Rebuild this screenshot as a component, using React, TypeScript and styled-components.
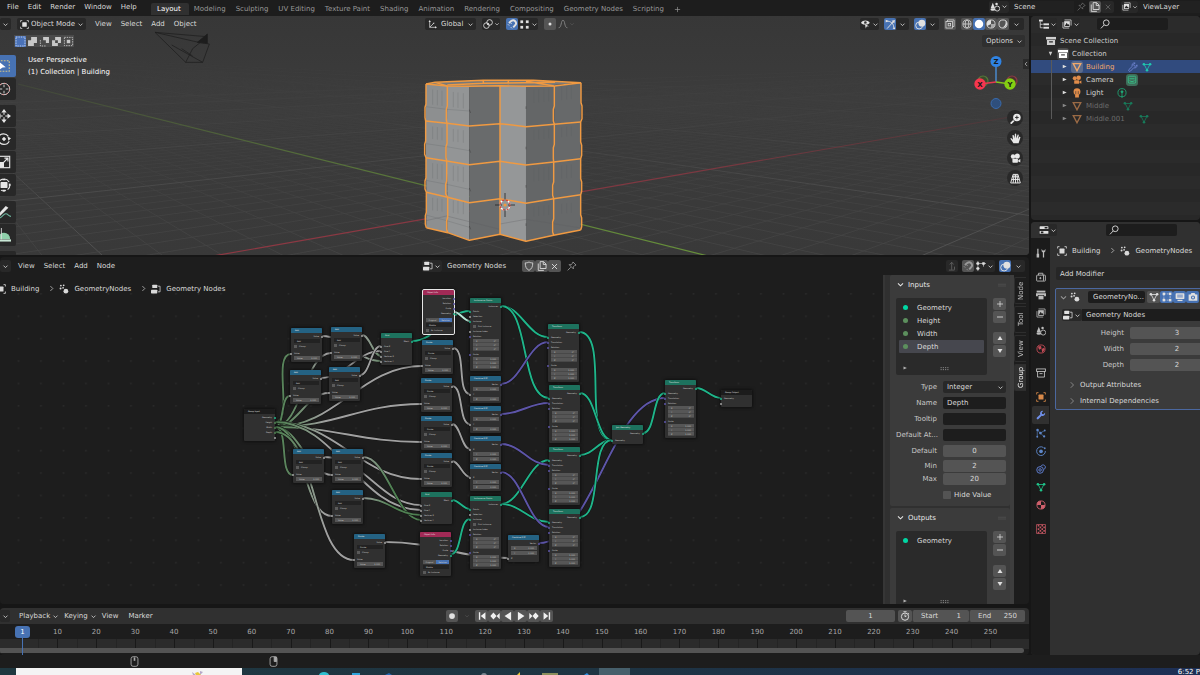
import React from 'react';
import styled, { createGlobalStyle, css } from 'styled-components';

const Global = createGlobalStyle`
  *, *::before, *::after { box-sizing: border-box; }
  html, body { margin: 0; background: #161616; }
  body, button, input, select {
    font-family: 'DejaVu Sans', Verdana, sans-serif;
    font-size: 7px;
    line-height: 10px;
    color: #d9d9d9;
  }
  button, input, select { margin: 0; padding: 0; border: 0; background: none; outline: none; appearance: none; border-radius: 0; }
  svg { display: block; flex: none; }
`;

/* ---------- icons, drawn on a 16 unit square ---------- */

const mesh = (
  <g fill="none" stroke="currentColor" strokeWidth="1.3">
    <path d="M3.5 4h9L8 13z" />
    <g fill="currentColor" stroke="none">
      <circle cx="3" cy="3.5" r="2" /><circle cx="13" cy="3.5" r="2" /><circle cx="8" cy="13" r="2" />
    </g>
  </g>
);

const movieCamera = (
  <g fill="currentColor">
    <circle cx="4.4" cy="5" r="3.2" /><circle cx="10.6" cy="4.4" r="3.7" />
    <rect x="3.5" y="8.5" width="8" height="5.5" rx="1" /><path d="M12 10.5l3-1.6v5l-3-1.6z" />
  </g>
);

const imageStack = (
  <g>
    <path d="M4 1.5h10.5v9" fill="none" stroke="currentColor" strokeWidth="1.2" />
    <path d="M1.5 5v9.500h10" fill="none" stroke="currentColor" strokeWidth="1.2" />
    <rect x="3.500" y="3.500" width="9" height="9" fill="currentColor" />
    <path d="M4.500 11l3-5 2 3 1-1 1.500 3z" fill="#222" />
  </g>
);

const icons: Record<string, React.ReactNode> = {
  down: <path d="M3.500 6L8 10.500 12.500 6" fill="none" stroke="currentColor" strokeWidth="1.800" />,
  right: <path d="M5.500 2.500L11 8l-5.500 5.500" fill="none" stroke="currentColor" strokeWidth="1.600" />,
  left: <path d="M11 2.500L5.500 8l5.500 5.500" fill="none" stroke="currentColor" strokeWidth="1.800" />,
  triRight: <path d="M4 4l9 4-9 4z" fill="currentColor" />,
  triDown: <path d="M4 4h8l-4 9z" fill="currentColor" />,
  up: <path d="M3 12l5-8 5 8z" fill="currentColor" />,
  downFill: <path d="M3 4l5 8 5-8z" fill="currentColor" />,
  plus: <path d="M8 2v12M2 8h12" stroke="currentColor" strokeWidth="1.500" />,
  minus: <path d="M2 8h12" stroke="currentColor" strokeWidth="1.700" />,
  close: <path d="M3.500 3.500l9 9M12.500 3.500l-9 9" stroke="currentColor" strokeWidth="1.600" />,
  grip: <path d="M1 6.500h14M1 10h14" stroke="currentColor" strokeWidth="1.300" strokeDasharray="2 2" />,
  object: (
    <g><rect x="4" y="4" width="8" height="8" rx="1" fill="currentColor" />
      <path d="M1 4V1h3M12 1h3v3M15 12v3h-3M4 15H1v-3" fill="none" stroke="currentColor" strokeWidth="1.300" /></g>
  ),
  selNew: (
    <g><rect width="16" height="16" fill="#4a72b8" />
      <rect x="1.500" y="1.500" width="13" height="13" fill="none" stroke="#c9d8f2" strokeWidth="1.300" strokeDasharray="2 1.500" /></g>
  ),
  selAdd: <path d="M6 1.500h8.500V10H10v4.500H1.500V6H6z" fill="currentColor" />,
  selSub: (
    <g><path d="M6 1.500h8.500V10H10V6H6z" fill="currentColor" />
      <path d="M2 6v8.500h8" fill="none" stroke="currentColor" strokeWidth="1.300" strokeDasharray="2 1.500" /></g>
  ),
  selDiff: <path fillRule="evenodd" d="M6 1.500h8.500V10H10v4.500H1.500V6H6zM6 6v4h4V6z" fill="currentColor" />,
  selInt: (
    <g><rect x="5.500" y="5.500" width="5" height="5" fill="currentColor" />
      <rect x="2" y="2" width="12" height="12" fill="none" stroke="currentColor" strokeWidth="1.300" strokeDasharray="2 1.500" /></g>
  ),
  boxTool: (
    <g><rect x="1" y="2" width="13" height="12" fill="none" stroke="#d3c489" strokeWidth="1.200" strokeDasharray="2 1.400" />
      <path d="M3 3.500l7 6-3.600.2L3 12z" fill="#fff" /></g>
  ),
  cursorTool: (
    <g fill="none" stroke="currentColor" strokeWidth="1">
      <circle cx="8" cy="8" r="6.500" /><circle cx="8" cy="8" r="6.500" stroke="#d88" strokeDasharray="2.500 2.500" />
      <path d="M8 3v3M8 10v3M3 8h3M10 8h3" />
    </g>
  ),
  moveTool: (
    <g fill="currentColor"><path d="M8 0l3 4H5zM8 16l3-4H5zM0 8l4-3v6zM16 8l-4-3v6z" />
      <path d="M8 4v2.500M8 9.500v3M4 8h2.500M9.500 8h3" stroke="currentColor" strokeWidth="1.200" /></g>
  ),
  rotateTool: (
    <g><path d="M2 5a6.700 6.700 0 0 1 11 0M14 10.500a6.700 6.700 0 0 1-12 0" fill="none" stroke="currentColor" strokeWidth="1.300" />
      <path d="M12 5l4 2-3 3zM8 5.500L10.500 8 8 10.500 5.500 8z" fill="currentColor" /></g>
  ),
  scaleTool: (
    <g><rect x="1.500" y="1.500" width="13" height="13" fill="none" stroke="currentColor" strokeWidth="1.300" />
      <rect x="1.500" y="8" width="6.500" height="6.500" fill="currentColor" />
      <path d="M7 9l5-5M8.500 3.500h4v4" fill="none" stroke="currentColor" strokeWidth="1.300" /></g>
  ),
  transformTool: (
    <g><circle cx="8" cy="8" r="6.800" fill="none" stroke="currentColor" strokeWidth="1.200" strokeDasharray="6 2" />
      <rect x="4" y="4.500" width="8" height="7" rx="1" fill="currentColor" />
      <path d="M8 0l2 2.500H6zM8 16l2-2.500H6zM16 8l-2.500-2v4z" fill="currentColor" /></g>
  ),
  annotateTool: (
    <g><path d="M0 12L10 1l3 2L3 13z" fill="currentColor" />
      <path d="M2 15c4 0 5-5 8-5 3 0 3 3 6 3" fill="none" stroke="#6fb7a0" strokeWidth="1.200" /></g>
  ),
  measureTool: (
    <g><path d="M1 12.500A7 7 0 0 1 15 12.500z" fill="#8fd0ab" /><rect x="-2" y="13" width="18" height="2.500" fill="#c9e8d6" />
      <path d="M5 0v13" stroke="#ddd" strokeWidth="1" /></g>
  ),
  axes: (
    <g><path d="M3 2v11h11M3 13l7-7" fill="none" stroke="currentColor" strokeWidth="1.300" />
      <path d="M3 0l2 3.500H1zM16 13l-3.500-2v4zM11 4v3L8 6z" fill="currentColor" /></g>
  ),
  pivot: (
    <g fill="none" stroke="currentColor" strokeWidth="1.400">
      <circle cx="5.500" cy="10.500" r="4.500" /><circle cx="10.500" cy="5.500" r="4.500" /><circle cx="8" cy="8" r="1" fill="currentColor" />
    </g>
  ),
  magnet: (
    <g><path d="M3 6.500L7.200 3a4.600 4.600 0 0 1 6.300 6.500L10 13.500" fill="none" stroke="currentColor" strokeWidth="3" />
      <path d="M1.500 8.500l2 2M5.500 6l2 2M8 15l-2-2" stroke="currentColor" strokeWidth="1.500" /></g>
  ),
  verts: <g fill="currentColor"><rect x="2" y="2" width="4" height="4" /><rect x="10" y="2" width="4" height="4" /><rect x="2" y="10" width="4" height="4" /><rect x="10" y="10" width="4" height="4" /></g>,
  dot: <circle cx="8" cy="8" r="2.400" fill="currentColor" />,
  record: <circle cx="8" cy="8" r="4.600" fill="currentColor" />,
  falloff: <path d="M1 14c5 0 3.500-12 7-12s2 12 7 12" fill="none" stroke="currentColor" strokeWidth="1.400" />,
  eye: (
    <g><path d="M0 6c3-5 11-5 14 0-3 4.500-11 4.500-14 0z" fill="currentColor" /><circle cx="7" cy="5.500" r="2" fill="#333" />
      <path d="M6 6l1 9 2.500-3 3.500.4z" fill="currentColor" stroke="#333" strokeWidth=".7" /></g>
  ),
  gizmo: (
    <g><path d="M2 3c7 0 11 4 11 11M3 14L12 4" fill="none" stroke="currentColor" strokeWidth="1.400" />
      <path d="M14.500 1.500l-5 1 4 4zM1 1l4 2-4 2zM15 15l-4-1 3-2z" fill="currentColor" /></g>
  ),
  overlay: (
    <g><circle cx="6" cy="9.500" r="5" fill="none" stroke="currentColor" strokeWidth="1.400" /><circle cx="10" cy="6" r="5" fill="currentColor" /></g>
  ),
  xray: <g fill="none" stroke="currentColor" strokeWidth="1.200"><rect x="1.500" y="4" width="10.500" height="10.500" /><path d="M4 4V1.500h10.500V12H12" /><rect x="5" y="7" width="4" height="4" /></g>,
  wire: <g fill="none" stroke="currentColor" strokeWidth="1.200"><circle cx="8" cy="8" r="6.500" /><ellipse cx="8" cy="8" rx="3" ry="6.500" /><path d="M1.500 8h13" /></g>,
  solid: <circle cx="8" cy="8" r="6.800" fill="currentColor" />,
  material: <g><circle cx="8" cy="8" r="6.500" fill="none" stroke="currentColor" strokeWidth="1.300" /><path d="M8 8V1.500A6.500 6.500 0 0 0 2 11z" fill="currentColor" /><path d="M8 8h6a6 6 0 0 1-6 6z" fill="currentColor" opacity=".6" /></g>,
  rendered: <g><circle cx="8" cy="8" r="6.500" fill="none" stroke="currentColor" strokeWidth="1.400" /><path d="M12 3a6 6 0 0 1-5 10.500C11 12 13 8 12 3z" fill="currentColor" /></g>,
  tree: <g fill="currentColor"><rect x="0" y="1" width="6" height="3" /><path d="M2 4v10h4M2 8.500h4" fill="none" stroke="currentColor" strokeWidth="1.200" /><rect x="7" y="7" width="9" height="3" /><rect x="7" y="12.500" width="9" height="3" /></g>,
  imageStack,
  search: <g fill="none" stroke="currentColor" strokeWidth="1.500"><circle cx="10" cy="6" r="4.600" /><path d="M6.700 9.500L1.500 15" /></g>,
  archive: <g fill="currentColor"><rect x="0" y="1.500" width="16" height="4" /><path fillRule="evenodd" d="M1.500 6.500h13v8h-13zM5 8.500v1.800h6V8.500z" /></g>,
  archiveLine: <g fill="none" stroke="currentColor" strokeWidth="1.300"><rect x="1" y="1.500" width="14" height="4" /><path d="M2.500 5.500v9h11v-9M5.500 9h5" /></g>,
  triangle: <path d="M2 2.500h12L8 14z" fill="none" stroke="currentColor" strokeWidth="2.200" />,
  wrench: <path d="M14.500 4.500a4 4 0 0 1-5.400 4.700L4 14.500a1.700 1.700 0 0 1-2.500-2.500L6.800 7A4 4 0 0 1 11.500 1.500L9.200 4l.6 2.200 2.200.6z" fill="currentColor" />,
  wrenchLine: <path d="M14.500 4.500a4 4 0 0 1-5.400 4.700L4 14.500a1.700 1.700 0 0 1-2.500-2.500L6.800 7A4 4 0 0 1 11.500 1.500L9.200 4l.6 2.200 2.200.6z" fill="none" stroke="currentColor" strokeWidth="1.200" />,
  mesh,
  movieCamera,
  cameraData: <g fill="none" stroke="currentColor" strokeWidth="1.300"><rect x="2" y="2" width="12" height="11" rx="2" /><path d="M4 6h8M4 9c3 2 5 2 8 0" /></g>,
  bulb: <g fill="currentColor"><circle cx="8" cy="6" r="5.500" /><path d="M5 10h6v5H5z" /><path d="M6 5v5M10 5v5" stroke="#333" strokeWidth="1" /></g>,
  lightData: <g fill="none" stroke="currentColor" strokeWidth="1.300"><circle cx="8" cy="7.500" r="6.500" /><circle cx="8" cy="6" r="1.600" fill="currentColor" /><path d="M8 7v9" /></g>,
  scene: <g fill="currentColor"><path d="M4.500 1L8 10H1z" /><circle cx="10.500" cy="3" r="2" /><circle cx="11.500" cy="10.500" r="4" fill="none" stroke="currentColor" strokeWidth="1.400" /><ellipse cx="4.500" cy="12" rx="3.800" ry="2" /></g>,
  pin: <path d="M9.500 1.500l5 5-2 .6-2.500 2.500.2 3-6.800-6.800 3 .2L9 3.500zM6 10l-5 5" fill="none" stroke="currentColor" strokeWidth="1.200" />,
  copy: <g fill="none" stroke="currentColor" strokeWidth="1.400"><path d="M5 1h5.500L14.500 5v7H5z" /><path d="M10 1v4.500h4.500M2 4v11h9" /></g>,
  shield: <path d="M8 1.500C6 3 4 3 2 3c0 6 1.500 9.500 6 12 4.500-2.500 6-6 6-12-2 0-4 0-6-1.500z" fill="none" stroke="currentColor" strokeWidth="1.300" />,
  nodes: <g fill="currentColor"><rect x="2" y="1" width="8" height="5.500" rx="1" /><rect x="0" y="9" width="10" height="6" rx="1" /><path d="M11 3.500h3.500v9H11" fill="none" stroke="currentColor" strokeWidth="1.200" /></g>,
  geo: <g fill="currentColor"><circle cx="11" cy="11.500" r="3.800" /><circle cx="3" cy="2.500" r="1.400" /><circle cx="7.500" cy="2" r="1.400" /><circle cx="2.500" cy="7" r="1.600" /><circle cx="6.500" cy="6" r="1.400" /></g>,
  props: <g fill="currentColor"><rect x="1" y="2" width="14" height="4.500" rx="1" /><rect x="1" y="9.500" width="14" height="4.500" rx="1" /><path d="M9 3h4.500v2.500H9zM3 10.500h4V13H3z" fill="#222" /></g>,
  parent: <path d="M3 14.500h9M7.500 14V2.500M4.500 5.500l3-3.500 3 3.500M12 14V9" fill="none" stroke="currentColor" strokeWidth="1.300" />,
  snapGrid: <g fill="currentColor"><path d="M3 0v16M0 4h16M0 12h6M12 4v5" stroke="currentColor" strokeWidth="1" fill="none" /><rect x="1" y="2" width="4" height="4" /><rect x="10" y="2" width="4" height="4" /><rect x="1" y="10" width="4" height="4" /></g>,
  tools: <g fill="currentColor"><path d="M2 1h2v8h1v6H1V9h1z" /><path d="M9 1v4l2 2v8h2V7l2-2V1l-1.500 3h-3z" /></g>,
  render: <g fill="none" stroke="currentColor" strokeWidth="1.400"><rect x="1" y="5" width="14" height="9.500" rx="1" /><path d="M4 5V2h7v3M12 5v9" /><circle cx="7" cy="9.800" r="1" fill="currentColor" /></g>,
  output: <g fill="currentColor"><rect x="1" y="1" width="14" height="3" /><path d="M0 5h16v5h-3V8H3v2H0z" /><rect x="4" y="9" width="8" height="6" /></g>,
  world: <g><circle cx="8" cy="8" r="6.500" fill="none" stroke="currentColor" strokeWidth="1.400" /><path d="M3 4l5-1 1 4-4 2zM9 8l4-2 1 3-4 5z" fill="currentColor" /></g>,
  particles: <g><path d="M2 3l5 5 7-4M2 3v11M7 8l6 6" fill="none" stroke="currentColor" strokeWidth="1" /><g fill="currentColor"><circle cx="2.500" cy="3" r="2" /><circle cx="7" cy="8" r="2.200" /><circle cx="14" cy="4" r="1.500" /><circle cx="2" cy="14" r="1.500" /><circle cx="13" cy="13.500" r="1.800" /></g></g>,
  physics: <g><path d="M12 2.500A7 7 0 1 0 15 8" fill="none" stroke="currentColor" strokeWidth="1.500" /><circle cx="8" cy="8.500" r="3" fill="currentColor" /><circle cx="14" cy="3.500" r="1.500" fill="currentColor" /></g>,
  constraint: <g fill="none" stroke="currentColor" strokeWidth="1.600"><circle cx="6.500" cy="9.500" r="5.300" /><circle cx="6.500" cy="9.500" r="2" /><path d="M7 4.500c2-4 7-4 8 0 0 3-2 4-3 5" /></g>,
  materialTab: <g><circle cx="8" cy="8" r="6.500" fill="none" stroke="currentColor" strokeWidth="1.400" /><path d="M8 1.500V8H1.500A6.500 6.500 0 0 1 8 1.500zM8 8h6.500A6.500 6.500 0 0 1 8 14.500z" fill="currentColor" /></g>,
  texture: <g><rect x="1" y="1" width="14" height="14" fill="none" stroke="currentColor" strokeWidth="1.200" /><path d="M4 1v14M10 1v14" stroke="currentColor" strokeWidth="2.500" strokeDasharray="2.800 2.800" /><path d="M7 1v14M13 1v14" stroke="currentColor" strokeWidth="2.500" strokeDasharray="2.800 2.800" strokeDashoffset="2.800" /></g>,
  editMesh: <g><rect x="3" y="3" width="10" height="10" fill="none" stroke="currentColor" strokeWidth="1" strokeDasharray="3 1.500" /><g fill="currentColor"><rect x="1" y="1" width="4" height="4" /><rect x="11" y="1" width="4" height="4" /><rect x="1" y="11" width="4" height="4" /><rect x="11" y="11" width="4" height="4" /></g></g>,
  monitor: <g><rect x="1" y="2" width="14" height="9" rx="1" fill="currentColor" /><path d="M3.500 4h9v5h-9z" fill="#4a72b8" opacity=".5" /><rect x="4" y="12.500" width="8" height="2" fill="currentColor" /></g>,
  photo: <g><path fillRule="evenodd" d="M1 4h3l1.500-2.500h5L12 4h3v10H1zM8 5.500a3.300 3.300 0 1 0 0 6.600 3.300 3.300 0 0 0 0-6.600z" fill="currentColor" /><circle cx="8" cy="8.800" r="1.600" fill="currentColor" /></g>,
  zoomIn: <g><circle cx="10" cy="6.500" r="5.500" fill="currentColor" /><path d="M5.500 11L1 15.500" stroke="currentColor" strokeWidth="2.600" /><path d="M10 3.800v5.400M7.300 6.500h5.400" stroke="#222" strokeWidth="1.300" /></g>,
  hand: <path d="M5 15C3 12 1.500 10 .5 8.500 1.500 7 3 8 4.500 10L3.500 3.500C4.500 2 5.500 3 6 4.500L7 8V1.500c1-1.500 2-1 2 .5l.2 6L11 2.500c1-1 2 0 1.700 1l-1.200 5.500L13.500 5.500c1.500-.5 2 .5 1.500 1.500L12.500 15z" fill="currentColor" />,
  persp: <path d="M4.500 2h7L15 14.500H1zM8 2v12.500M3.600 5.500h8.800M2.500 9.500h11M6 2L4.500 14.500M10 2l1.500 12.500" fill="none" stroke="currentColor" strokeWidth="1.400" />,
  first: <path d="M3 2v12h2.200V2zM13.500 2v12L6 8z" fill="currentColor" />,
  last: <path d="M13 2v12h-2.200V2zM2.500 2v12L10 8z" fill="currentColor" />,
  prevKey: <path d="M5.500 2.500L10.500 8l-5 5.500L.5 8zM15.500 3v10L10.500 8z" fill="currentColor" />,
  nextKey: <path d="M10.500 2.500L15.500 8l-5 5.500L5.500 8zM.5 3v10L5.500 8z" fill="currentColor" />,
  playBack: <path d="M13 1v14L2.500 8z" fill="currentColor" />,
  play: <path d="M3 1v14L13.500 8z" fill="currentColor" />,
  clock: <g fill="none" stroke="currentColor" strokeWidth="1.500"><circle cx="8" cy="9" r="5.800" /><path d="M5.500 1.200h5M8 5.500V9l2.500-1M12.500 3.500l2 1.500" /></g>,
  mouseM: <g fill="none" stroke="currentColor" strokeWidth="1.300"><rect x="3" y="1" width="10" height="14" rx="3" /><path d="M8 2v5" strokeWidth="2.400" /></g>,
  mouseR: <g fill="none" stroke="currentColor" strokeWidth="1.300"><rect x="3" y="1" width="10" height="14" rx="3" /><path d="M9 1.500h3.500V8H9z" fill="currentColor" /></g>,
};

const Svg = styled.svg<{ $c?: string }>`color: ${p => p.$c || 'inherit'};`;
function Icon({ n, s = 10, c }: { n: string; s?: number; c?: string }) {
  return <Svg viewBox="0 0 16 16" width={s} height={s} $c={c} aria-hidden="true">{icons[n]}</Svg>;
}

/* ---------- shared parts ---------- */

const Shell = styled.div`
  height: 100vh; min-height: 620px; display: flex; flex-direction: column; overflow: hidden; background: #161616;
`;
const Group = styled.div<{ $w?: number; $gap?: number; $end?: boolean }>`
  display: flex; align-items: center; flex: none;
  gap: ${p => p.$gap || 0}px;
  ${p => p.$w && css`width: ${p.$w}px;`}
  ${p => p.$end && css`margin-left: auto;`}
`;
const IconButton = styled.button<{ $tone?: 'dark' | 'grey' | 'blue' | 'none'; $w?: number }>`
  display: flex; align-items: center; justify-content: center; gap: 1px; flex: none;
  height: 12px; width: ${p => p.$w || 12}px; border-radius: 2px;
  color: #e0e0e0;
  background: ${p => ({ dark: '#282828', grey: '#545454', blue: '#4772b3', none: 'transparent' })[p.$tone || 'dark']};
`;
const MenuButton = styled.button`flex: none; white-space: nowrap; height: 12px; display: flex; align-items: center; gap: 2px;`;
const SelectWrap = styled.label<{ $w: number; $pad: number }>`
  position: relative; display: flex; align-items: center; flex: none;
  width: ${p => p.$w}px; height: 12px; border-radius: 2px; background: #282828; color: #e0e0e0;
  > svg:first-child { position: absolute; left: 3px; }
  > svg:last-child { position: absolute; right: 2px; pointer-events: none; }
  select { width: 100%; height: 100%; padding-left: ${p => p.$pad}px; }
`;
function Drop({ label, value, w, pad = 4, icon }: { label: string; value: string; w: number; pad?: number; icon?: string }) {
  return (
    <SelectWrap $w={w} $pad={pad}>
      {icon && <Icon n={icon} s={9} />}
      <select aria-label={label} defaultValue={value}><option>{value}</option></select>
      <Icon n="down" s={7} />
    </SelectWrap>
  );
}
const TextField = styled.input<{ $number?: boolean }>`
  width: 100%; min-width: 0; height: 12px; border-radius: 2px; padding: 0 4px;
  background: ${p => (p.$number ? '#545454' : '#1d1d1d')};
  text-align: ${p => (p.$number ? 'center' : 'left')};
`;
const SearchBox = styled.label`
  display: flex; align-items: center; width: 71px; height: 12px; padding: 0 3px; background: #1d1d1d; border-radius: 2px;
  input { flex: 1; min-width: 0; }
`;
const Search = ({ label }: { label: string }) => (
  <SearchBox><Icon n="search" s={10} /><input aria-label={label} /></SearchBox>
);

/* ---------- top bar ---------- */

const TopBar = styled.header`
  flex: none; height: 16px; display: flex; align-items: flex-start; background: #1d1d1d; overflow: hidden;
`;
const Menus = styled.nav`display: flex; gap: 9px; width: 151px; padding: 1px 0 0 7px;`;
const Tabs = styled.nav`display: flex; padding-top: 3px;`;
const Tab = styled.button<{ $on?: boolean }>`
  height: 12px; padding: 0 ${p => (p.$on ? '8px 0 6px' : '5px')}; white-space: nowrap; border-radius: 2px 2px 0 0;
  color: ${p => (p.$on ? '#fff' : '#989898')};
  background: ${p => (p.$on ? '#303030' : 'transparent')};
`;
const SceneBar = styled.div`
  display: flex; align-items: center; flex: none; margin-left: auto; width: 211px; height: 13px; overflow: hidden; white-space: nowrap;
`;
const SceneName = styled.input<{ $w: number }>`flex: none; width: ${p => p.$w}px; height: 12px; padding-left: 5px; background: #212121;`;

/* ---------- 3D viewport ---------- */

const Main = styled.div`flex: 1; min-height: 0; display: grid; grid-template-columns: minmax(0, 1fr) 169px; gap: 2px;`;
const Column = styled.div`display: flex; flex-direction: column; min-width: 0; min-height: 0;`;
const Viewport = styled.section`
  position: relative; flex: 0 0 239px; overflow: hidden; border-radius: 0 0 4px 0; background: #3b3b3b;
`;
const Scene3D = styled.svg`position: absolute; left: 0; top: 0;`;
const Bar = styled.div<{ $tall?: boolean }>`position: relative; display: flex; flex: none; align-items: center; height: ${p => (p.$tall ? 18 : 16)}px;`;
const SubBar = styled.div`position: relative; display: flex; align-items: center; justify-content: space-between; height: 18px; padding: 0 4px 0 14px;`;
const SelModes = styled.div`display: flex; button { width: 12px; height: 12px; color: #c8c8c8; background: #4a4a4a; border-radius: 0; }`;
const OptionsButton = styled.button`display: flex; align-items: center; gap: 3px; height: 12px; padding: 0 2px 0 4px; background: #2f2f2f; border-radius: 2px;`;
const ViewInfo = styled.div`position: absolute; left: 28px; top: 38px; line-height: 12px; color: #fff; white-space: nowrap;`;
const ToolStrip = styled.div`position: absolute; left: -12px; top: 39px; width: 28px; display: flex; flex-direction: column;`;
const Tool = styled.button<{ $on?: boolean; $gap?: boolean }>`
  height: 22px; margin-bottom: ${p => (p.$gap ? 5 : 1)}px; padding-left: 9px;
  display: flex; align-items: center; border-radius: 2px; color: #e6e6e6;
  background: ${p => (p.$on ? '#4772b3' : '#282828')};
`;
const Gizmo = styled.svg`position: absolute; right: 10px; top: 38px;`;
const NavButtons = styled.div`position: absolute; right: 6px; top: 94px; display: grid; gap: 4px;`;
const NavButton = styled.button`
  width: 16px; height: 16px; border-radius: 50%; background: #292929; color: #e8e8e8; display: grid; place-items: center;
`;
const RegionArrow = styled.button`position: absolute; right: 0; top: 43px; width: 6px; height: 10px; color: #ccc; background: #2a2a2a;`;

function floorLines(vx: number, origin: number, step: number) {
  const lines = [];
  for (let k = -60; k <= 60; k++) {
    const major = k % 10 === 0;
    if (k === 0 || (!major && Math.abs(k) > 38)) continue;
    const x = origin + k * step;
    lines.push(<line key={k} x1={vx} y1={50} x2={x} y2={256} stroke={major ? '#585858' : '#494949'} strokeWidth={major ? 0.9 : 0.7} />);
  }
  return lines;
}

const levels = [
  [[78, 252], [142, 258], [208, 259], [300, 257], [378, 259], [463, 258], [543, 248]],
  [[77, 363], [141, 370], [208, 378], [300, 371], [378, 380], [463, 373], [542, 366]],
  [[78, 473], [140, 483], [208, 494], [300, 484], [378, 495], [461, 486], [542, 476]],
  [[79, 577], [143, 592], [208, 608], [300, 596], [378, 610], [461, 596], [542, 584]],
  [[79, 683], [143, 698], [208, 721], [300, 703], [378, 724], [461, 706], [542, 690]],
];

function Building() {
  const faces = ['#8d8f90', '#939596', '#696b6c', '#959798', '#646667', '#67696a'];
  return (
    <g transform="translate(400 -16) scale(.33333)">
      <path d="M105 247L250 241H400L543 248L378 262H208L78 253z" fill="#77797a" />
      {levels.slice(0, 4).map((row, i) => faces.map((f, j) => {
        const a = row[j], b = row[j + 1], c = levels[i + 1][j + 1], d = levels[i + 1][j];
        return <path key={`${i}-${j}`} fill={f} d={`M${a}L${b}L${c}L${d}z`} />;
      }))}
      {levels.slice(0, 4).map((row, i) => (
        <g key={i} stroke="#55585a" strokeWidth="1.400" opacity=".45" fill="none">
          {[98, 112, 126, 160, 174, 190].map(x => <path key={x} d={`M${x} ${row[0][1] + 14 + (x - 78) * .12}v${i % 2 ? 38 : 46}`} />)}
          {[402, 416, 432, 446, 485, 500, 514].map(x => <path key={x} d={`M${x} ${row[4][1] + 12 - (x - 378) * .1}v${i % 2 ? 30 : 40}`} />)}
          <path d={`M78 ${row[0][1] + 68}L140 ${row[1][1] + 70}L208 ${row[2][1] + 74}`} />
          <path d={`M208 ${row[2][1] + 70}l4 10M378 ${row[4][1] + 60}v8`} stroke="#333" strokeWidth="2.500" />
        </g>
      ))}
      <path d="M300 688l-160 -40l-62 14M300 672l78 -14l164 26" stroke="#5b5d5e" strokeWidth="1.500" fill="none" opacity=".6" />
      <g fill="none" stroke="#f09a42" strokeWidth="4.400" strokeLinejoin="round">
        {levels.map((row, i) => <polyline key={i} points={row.map(p => p.join(',')).join(' ')} />)}
        {[0, 1, 3, 5, 6].map(j => (
          <polyline key={j} points={levels.map((row, i) => {
            const p = row[j];
            const n = j === 6 ? 3 : -3;
            const next = levels[i + 1];
            return j === 3 || !next ? `${p[0]},${p[1]}` : `${p[0]},${p[1]} ${p[0]},${p[1] + 60} ${p[0] + n},${p[1] + 70} ${p[0] + n},${next[j][1] - 10}`;
          }).join(' ')} />
        ))}
        <path d="M78 252L105 247L250 241H400L543 248M142 255L250 250L465 247M250 241v10M325 241v12M378 244L463 258M105 247L142 258" />
      </g>
    </g>
  );
}

function ViewportDrawing() {
  return (
    <Scene3D width="1600" height="239" viewBox="0 0 1600 239" aria-hidden="true">
      <defs>
        <linearGradient id="fade" x1="0" y1="30" x2="0" y2="230" gradientUnits="userSpaceOnUse">
          <stop offset="0" stopColor="#000" /><stop offset=".35" stopColor="#333" /><stop offset=".7" stopColor="#999" /><stop offset="1" stopColor="#ddd" />
        </linearGradient>
        <linearGradient id="haze" x1="0" y1="0" x2="0" y2="1">
          <stop offset="0" stopColor="#373737" /><stop offset=".35" stopColor="#3c3c3c" /><stop offset="1" stopColor="#393939" />
        </linearGradient>
        <linearGradient id="gx" x1="213" y1="0" x2="1010" y2="0" gradientUnits="userSpaceOnUse">
          <stop offset="0" stopColor="#8f3843" /><stop offset=".6" stopColor="#7d3841" /><stop offset="1" stopColor="#4b383a" />
        </linearGradient>
        <linearGradient id="gy" x1="15" y1="0" x2="708" y2="0" gradientUnits="userSpaceOnUse">
          <stop offset="0" stopColor="#41463a" /><stop offset=".45" stopColor="#56703a" /><stop offset="1" stopColor="#67913a" />
        </linearGradient>
        <mask id="floor" maskUnits="userSpaceOnUse" x="0" y="0" width="1600" height="239"><rect width="1600" height="239" fill="url(#fade)" /></mask>
      </defs>
      <rect width="1600" height="239" fill="url(#haze)" />
      <g mask="url(#floor)"><g transform="translate(0 -16)">
        {floorLines(-120, 707, 60.4)}
        {floorLines(1396, 213, 70.8)}
      </g></g>
      <path d="M213 240L1010 101" stroke="url(#gx)" strokeWidth="1.200" />
      <path d="M18 68L708 240" stroke="url(#gy)" strokeWidth="1.200" />
      <g transform="translate(0 -16) scale(.33333)" fill="none" stroke="#191919" strokeWidth="2.200" opacity=".85">
        <path d="M465 97L557 187H608L628 132L600 128M465 97L600 128M465 97L620 110M515 135L608 187M557 187L578 146L600 128M545 146L578 168" />
        <path d="M592 127L622 102V130z" fill="#191919" />
      </g>
      <Building />
      <g transform="translate(505 189)" fill="none">
        <circle r="5" stroke="#fff" strokeWidth="1.200" />
        <circle r="5" stroke="#d5382f" strokeWidth="1.200" strokeDasharray="2 2" />
        <path d="M0 -12v8M0 4v8M-10 0h7M3 0h7" stroke="#222" strokeWidth=".8" />
        <circle r="1.600" fill="#f39a3d" />
      </g>
    </Scene3D>
  );
}

function ViewportPanel() {
  const tools: [string, boolean?][] = [['boxTool'], ['cursorTool', true], ['moveTool'], ['rotateTool'], ['scaleTool'], ['transformTool', true], ['annotateTool'], ['measureTool', true], ['archive']];
  return (
    <Viewport aria-label="3D viewport">
      <ViewportDrawing />
      <Bar>
        <Group $w={17}><IconButton $w={11} aria-label="Editor type"><Icon n="down" s={7} /></IconButton></Group>
        <Drop label="Mode" value="Object Mode" w={69} pad={14} icon="object" />
        <Group $gap={9} $w={339}>
          <i />
          {['View', 'Select', 'Add', 'Object'].map(m => <MenuButton key={m}>{m}</MenuButton>)}
        </Group>
        <Drop label="Orientation" value="Global" w={51} pad={16} icon="axes" />
        <Group $gap={6}>
          <i />
          <IconButton $w={18} aria-label="Pivot point"><Icon n="pivot" /><Icon n="down" s={6} /></IconButton>
          <Group>
            <IconButton $tone="blue" aria-label="Snap"><Icon n="magnet" /></IconButton>
            <IconButton $w={20} aria-label="Snap to"><Icon n="verts" s={11} /><Icon n="down" s={7} /></IconButton>
          </Group>
          <Group>
            <IconButton $tone="grey" aria-label="Proportional editing"><Icon n="dot" /></IconButton>
            <IconButton $w={20} $tone="none" aria-label="Falloff"><Icon n="falloff" c="#8a8a8a" /><Icon n="down" s={6} c="#5a5a5a" /></IconButton>
          </Group>
        </Group>
        <Group $end $gap={5}>
          <IconButton $w={19} aria-label="Object visibility"><Icon n="eye" /><Icon n="down" s={7} /></IconButton>
          <Group>
            <IconButton $tone="blue" aria-label="Gizmos"><Icon n="gizmo" s={11} /></IconButton>
            <IconButton $w={13} aria-label="Gizmo options"><Icon n="down" s={7} /></IconButton>
          </Group>
          <Group>
            <IconButton $tone="blue" aria-label="Overlays"><Icon n="overlay" s={11} /></IconButton>
            <IconButton $w={13} aria-label="Overlay options"><Icon n="down" s={7} /></IconButton>
          </Group>
          <IconButton $tone="grey" aria-label="X-ray"><Icon n="xray" /></IconButton>
          <Group>
            <IconButton $tone="grey" aria-label="Wireframe"><Icon n="wire" /></IconButton>
            <IconButton $tone="blue" aria-label="Solid"><Icon n="solid" c="#fff" /></IconButton>
            <IconButton $tone="grey" aria-label="Material preview"><Icon n="material" /></IconButton>
            <IconButton $tone="grey" aria-label="Rendered"><Icon n="rendered" /></IconButton>
            <IconButton $w={15} aria-label="Shading options"><Icon n="down" s={7} /></IconButton>
          </Group>
          <i />
        </Group>
      </Bar>
      <SubBar>
        <SelModes>{['selNew', 'selAdd', 'selSub', 'selDiff', 'selInt'].map(n => <IconButton key={n} aria-label={n}><Icon n={n} s={11} /></IconButton>)}</SelModes>
        <OptionsButton>Options<Icon n="down" s={7} /></OptionsButton>
      </SubBar>
      <ToolStrip>
        {tools.map(([n, gap], i) => <Tool key={n} $on={i === 0} $gap={gap} aria-label={n}><Icon n={n} s={14} /></Tool>)}
      </ToolStrip>
      <ViewInfo>User Perspective<br />(1) Collection | Building</ViewInfo>
      <Gizmo width="48" height="56" viewBox="971 54 48 56" role="img" aria-label="Axis gizmo">
        <circle cx="983" cy="81" r="5" fill="#3a4a2c" stroke="#56793a" strokeWidth="1.200" />
        <circle cx="1012" cy="81" r="5" fill="#4a2f32" stroke="#8a3c44" strokeWidth="1.200" />
        <path d="M996 82V62" stroke="#4b8fd6" strokeWidth="1.400" />
        <path d="M996 82L980 84" stroke="#e8384f" strokeWidth="1.400" /><path d="M996 82l14 2" stroke="#83c31d" strokeWidth="1.400" />
        <circle cx="996" cy="61.500" r="5.500" fill="#2f83e3" /><circle cx="980" cy="84" r="5.700" fill="#f6364f" /><circle cx="1010" cy="84" r="5.700" fill="#84cf12" />
        <circle cx="996" cy="103.500" r="5" fill="#2f4f7c" stroke="#3a6bad" />
        <g fontSize="7" fontWeight="bold" textAnchor="middle" fill="#1a1a1a"><text x="996" y="64">Z</text><text x="980" y="87">X</text><text x="1010" y="87">Y</text></g>
      </Gizmo>
      <NavButtons>
        {['zoomIn', 'hand', 'movieCamera', 'persp'].map(n => <NavButton key={n} aria-label={n}><Icon n={n} s={11} /></NavButton>)}
      </NavButtons>
      <RegionArrow aria-label="Show sidebar"><Icon n="left" s={6} /></RegionArrow>
    </Viewport>
  );
}

/* ---------- node graph ---------- */

const green = '#1fb58a', purple = '#5d55a8', grey = '#a0a0a0', olive = '#4f8052';

const NodeBox = styled.article<{ $x: number; $y: number; $sel?: boolean }>`
  position: absolute; left: ${p => p.$x}px; top: ${p => p.$y}px; width: 31px; padding-bottom: 1px;
  background: #303030; font-size: 2px; line-height: 5px; color: #d0d0d0;
  box-shadow: 0 0 3px 1px #101010; border-radius: 1px;
  ${p => p.$sel && css`outline: 1px solid #e6e6e6;`}
`;
const NodeHead = styled.h3<{ $c: string }>`
  margin: 0 0 1px; height: 5px; padding: 0 4px; font-size: 2px; font-weight: normal; line-height: 5px; background: ${p => p.$c}; color: #e8e8e8; border-radius: 1px 1px 0 0;
`;
const Socket = styled.div<{ $c?: string; $out?: boolean; $gap?: boolean }>`
  position: relative; height: 5px; padding: 0 3px; text-align: ${p => (p.$out ? 'right' : 'left')};
  ${p => p.$gap && css`margin-top: 2px;`}
  &::before {
    content: ''; position: absolute; top: 2px; width: 2px; height: 2px; border-radius: 1px;
    ${p => (p.$out ? 'right: -1px;' : 'left: -1px;')} background: ${p => p.$c || '#a1a1a1'};
  }
`;
const NodeValue = styled.div<{ $dark?: boolean }>`
  display: flex; justify-content: space-between; height: 4px; line-height: 4px; margin: 0 2px 1px 3px; padding: 0 3px;
  background: ${p => (p.$dark ? '#222' : '#565656')};
`;
const NodeCheck = styled.div`
  height: 5px; padding-left: 3px; display: flex; align-items: center; gap: 2px;
  &::before { content: ''; width: 3px; height: 3px; background: #5a5a5a; }
`;
const NodeToggle = styled.div`
  display: flex; height: 4px; line-height: 4px; margin: 2px 2px 1px 3px; text-align: center;
  span { flex: 1; background: #545454; } span:last-child { background: #4772b3; }
`;
const Triple = styled.div`margin: 0 2px 1px 3px; height: 12px; background: #565656; line-height: 4px; div { display: flex; justify-content: space-between; height: 4px; padding: 0 3px; border-bottom: 1px solid #484848; }`;

type Kind = 'add' | 'divide' | 'grid' | 'info' | 'instance' | 'xyzY' | 'xyzX' | 'xyzZ' | 'transform' | 'join' | 'in' | 'out';
const nodes: Record<string, [Kind, number, number]> = {
  A: ['add', 291, 53], B: ['add', 331, 52], C: ['add', 290, 95], D: ['add', 329, 92], grid1: ['grid', 381, 58], input: ['in', 244, 134],
  E: ['add', 293, 174], F: ['add', 332, 174], G: ['add', 332, 215], H: ['divide', 354, 259],
  info1: ['info', 423, 15], M1: ['divide', 422, 65], M2: ['divide', 421, 103], M3: ['divide', 421, 141], M4: ['divide', 421, 178],
  grid2: ['grid', 421, 217], info2: ['info', 420, 257],
  inst1: ['instance', 470, 23], X1: ['xyzY', 470, 101], X2: ['xyzY', 470, 131], X3: ['xyzX', 470, 161], X4: ['xyzX', 470, 189],
  inst2: ['instance', 470, 221], X5: ['xyzZ', 508, 260],
  T1: ['transform', 548, 49], T2: ['transform', 549, 110], T3: ['transform', 549, 172], T4: ['transform', 549, 234],
  join: ['join', 612, 150], T5: ['transform', 665, 105], output: ['out', 721, 115],
};

const Vec = ({ v }: { v: string }) => <Triple><div><span>X</span><span>{v}</span></div><div><span>Y</span><span>{v}</span></div><div><span>Z</span><span>{v}</span></div></Triple>;

function NodeBody({ kind }: { kind: Kind }) {
  switch (kind) {
    case 'add': case 'divide': {
      const op = kind === 'add' ? 'Add' : 'Divide';
      return <><NodeHead $c="#246283">{op}</NodeHead><Socket $out>Value</Socket><NodeValue $dark><span>{op}</span></NodeValue><NodeCheck>Clamp</NodeCheck><Socket $gap>Value</Socket><NodeValue><span>Value</span><span>2.000</span></NodeValue></>;
    }
    case 'grid':
      return <><NodeHead $c="#1d725e">Grid</NodeHead><Socket $out $c={green}>Mesh</Socket>{['Size X', 'Size Y', 'Vertices X', 'Vertices Y'].map(t => <Socket key={t}>{t}</Socket>)}</>;
    case 'info':
      return <><NodeHead $c="#a12a56">Object Info</NodeHead>{['Location', 'Rotation', 'Scale'].map(t => <Socket key={t} $out $c={purple}>{t}</Socket>)}<Socket $out $c={green}>Geometry</Socket><NodeToggle><span>Original</span><span>Relative</span></NodeToggle><NodeValue $dark><span>Middle</span></NodeValue><NodeCheck>As Instance</NodeCheck></>;
    case 'instance':
      return <><NodeHead $c="#1d725e">Instance on Points</NodeHead><Socket $out $c={green}>Instances</Socket><Socket $c={green}>Points</Socket><Socket>Selection</Socket><Socket $c={green}>Instance</Socket><NodeCheck>Pick Instance</NodeCheck><Socket>Instance Index</Socket><Socket $c={purple}>Rotation</Socket><Vec v="0°" /><Socket $c={purple}>Scale</Socket><Vec v="1.000" /></>;
    case 'xyzX': case 'xyzY': case 'xyzZ':
      return <><NodeHead $c="#246283">Combine XYZ</NodeHead><Socket $out $c={purple}>Vector</Socket>{['X', 'Y', 'Z'].map(a => kind === `xyz${a}` ? <Socket key={a}>{a}</Socket> : <NodeValue key={a}><span>{a}</span><span>0.000</span></NodeValue>)}</>;
    case 'transform':
      return <><NodeHead $c="#1d725e">Transform</NodeHead><Socket $out $c={green}>Geometry</Socket><Socket $c={green}>Geometry</Socket><Socket $c={purple}>Translation</Socket><Socket $c={purple}>Rotation</Socket><Vec v="0°" /><Socket $c={purple}>Scale</Socket><Vec v="1.000" /></>;
    case 'join':
      return <><NodeHead $c="#1d725e">Join Geometry</NodeHead><Socket $out $c={green}>Geometry</Socket><Socket $gap $c={green}>Geometry</Socket></>;
    case 'in':
      return <><NodeHead $c="#1c1c1c">Group Input</NodeHead><Socket $out $c={green}>Geometry</Socket>{['Height', 'Width', 'Depth'].map(t => <Socket key={t} $out $c={olive}>{t}</Socket>)}<Socket $out /></>;
    default:
      return <><NodeHead $c="#1c1c1c">Group Output</NodeHead><Socket $c={green}>Geometry</Socket><Socket /></>;
  }
}

const links: [string, number, string, number, string][] = [
  ['input', 13, 'A', 26, 'url(#toGrey)'], ['input', 18, 'C', 26, 'url(#toGrey)'], ['input', 18, 'B', 26, 'url(#toGrey)'], ['input', 18, 'D', 26, 'url(#toGrey)'],
  ['input', 18, 'M1', 26, 'url(#toGrey)'], ['input', 18, 'M2', 26, 'url(#toGrey)'], ['input', 18, 'M3', 26, 'url(#toGrey)'], ['input', 13, 'M4', 26, 'url(#toGrey)'],
  ['input', 13, 'grid2', 18, 'url(#toGrey)'], ['input', 18, 'E', 26, 'url(#toGrey)'], ['input', 18, 'F', 26, 'url(#toGrey)'], ['input', 18, 'G', 26, 'url(#toGrey)'], ['input', 23, 'H', 26, 'url(#toGrey)'],
  ['A', 8, 'grid1', 28, 'url(#toGreen)'], ['B', 8, 'grid1', 23, 'url(#toGreen)'], ['C', 8, 'grid1', 18, grey], ['D', 8, 'grid1', 13, grey],
  ['E', 8, 'grid2', 13, grey], ['F', 8, 'grid2', 28, 'url(#toGreen)'], ['G', 8, 'grid2', 23, 'url(#toGreen)'],
  ['H', 8, 'X5', 23, grey], ['M1', 8, 'X1', 18, grey], ['M2', 8, 'X2', 18, grey], ['M3', 8, 'X3', 13, grey], ['M4', 8, 'X4', 13, grey],
  ['grid1', 8, 'inst1', 13, green], ['grid2', 8, 'inst2', 13, green], ['info2', 22, 'inst2', 23, green], ['info1', 22, 'inst1', 23, '#b5e6d6'],
  ['inst1', 8, 'T1', 13, green], ['inst1', 8, 'T2', 13, green], ['inst2', 8, 'T3', 13, green], ['inst2', 8, 'T4', 13, green],
  ['X1', 8, 'T1', 18, purple], ['X2', 8, 'T2', 18, purple], ['X3', 8, 'T3', 18, purple], ['X4', 8, 'T4', 18, purple], ['X5', 8, 'T5', 18, purple],
  ['T1', 8, 'join', 15, green], ['T2', 8, 'join', 15, green], ['T3', 8, 'join', 15, green], ['T4', 8, 'join', 15, green],
  ['join', 8, 'T5', 13, green], ['T5', 8, 'output', 8, green],
];

const Canvas = styled.div`position: relative; flex: 1; min-width: 0; overflow: hidden; background: #1d1d1d;`;
const Wires = styled.svg`position: absolute; inset: 0; width: 100%; height: 100%;`;
const PathBar = styled.nav`position: relative; display: flex; align-items: center; gap: 4px; height: 27px; margin-left: -4px; white-space: nowrap;`;
const Crumb = styled.a`display: flex; align-items: center; gap: 5px; color: #d9d9d9; text-decoration: none; margin-right: 5px;`;

function Graph() {
  return (
    <Canvas>
      <Wires aria-hidden="true">
        <defs>
          <pattern id="dots" x="232" y="7.300" width="22.500" height="22.400" patternUnits="userSpaceOnUse"><circle cx="11.500" cy="11.500" r=".9" fill="#2b2b2b" /></pattern>
          <linearGradient id="toGrey" x1="276" y1="0" x2="325" y2="0" gradientUnits="userSpaceOnUse"><stop offset="0" stopColor={olive} /><stop offset=".4" stopColor="#688a69" /><stop offset="1" stopColor={grey} /></linearGradient>
          <linearGradient id="toGreen" x1="360" y1="0" x2="405" y2="0" gradientUnits="userSpaceOnUse"><stop offset="0" stopColor={grey} /><stop offset=".7" stopColor={olive} /></linearGradient>
        </defs>
        <rect width="100%" height="100%" fill="url(#dots)" />
        {links.map(([a, ao, b, bo, c], i) => {
          const x1 = nodes[a][1] + 31, y1 = nodes[a][2] + ao, x2 = nodes[b][1], y2 = nodes[b][2] + bo;
          const h = Math.max((x2 - x1) * 0.42, Math.hypot(x2 - x1, y2 - y1) * 0.28);
          const d = `M${x1} ${y1}C${x1 + h} ${y1} ${x2 - h} ${y2} ${x2} ${y2}`;
          return <g key={i} fill="none"><path d={d} stroke="#121212" strokeWidth="2.800" /><path d={d} stroke={c} strokeWidth="1.900" /></g>;
        })}
      </Wires>
      <PathBar aria-label="Node path">
        <Crumb href="#object"><Icon n="object" s={10} />Building</Crumb><Icon n="right" s={7} />
        <Crumb href="#modifier"><Icon n="geo" s={10} />GeometryNodes</Crumb><Icon n="right" s={7} />
        <Crumb href="#tree"><Icon n="nodes" s={10} />Geometry Nodes</Crumb>
      </PathBar>
      {Object.entries(nodes).map(([id, [kind, x, y]]) => <NodeBox key={id} $x={x} $y={y} $sel={id === 'info1'}><NodeBody kind={kind} /></NodeBox>)}
    </Canvas>
  );
}

/* ---------- node editor frame and its sidebar ---------- */

const Editor = styled.section`flex: 1; min-height: 0; margin-top: 2px; display: flex; flex-direction: column; background: #1d1d1d; border-radius: 4px; overflow: hidden;`;
const EditorBody = styled.div`flex: 1; min-height: 0; display: flex;`;
const Sidebar = styled.aside`flex: none; width: 146px; display: flex; align-items: stretch; overflow: hidden; background: #1d1d1d;`;
const Panels = styled.div`width: 131px; padding-left: 5px; border-left: 2px solid #363636; border-right: 4px solid #3e3e3e; background: #303030; overflow: hidden;`;
const Panel = styled.section`padding: 0 4px 1px 6px; margin-bottom: 2px; background: #3b3b3b; border-radius: 2px;`;
const PanelHead = styled.h2`
  display: flex; align-items: center; gap: 3px; margin: 0; height: 19px; font-size: 7px; font-weight: normal; color: #e8e8e8;
  svg:last-child { margin-left: auto; color: #707070; }
`;
const ListRow = styled.div`display: flex; gap: 6px; margin: 4px 0;`;
const List = styled.ul`
  list-style: none; margin: 0; padding: 3px; width: 91px; height: 77px; background: #2a2a2a; border-radius: 2px;
  display: flex; flex-direction: column;
`;
const ListItem = styled.li<{ $on?: boolean; $c: string }>`
  display: flex; align-items: center; gap: 9px; height: 13px; padding-left: 4px; border-radius: 1px;
  background: ${p => (p.$on ? '#46474e' : 'transparent')};
  &::before { content: ''; width: 5px; height: 5px; border-radius: 50%; background: ${p => p.$c}; }
`;
const ListFoot = styled.li`margin-top: auto; height: 8px; display: flex; align-items: center; gap: 32px; padding-left: 3px; color: #b0b0b0;`;
const ListButtons = styled.div`
  display: flex; flex-direction: column; gap: 1px; width: 13px;
  button { width: 13px; } button:nth-child(3) { margin-top: 8px; }
`;
const PropRow = styled.label<{ $tight?: boolean }>`
  display: grid; grid-template-columns: 41px 63px; column-gap: 6px; align-items: center;
  height: ${p => (p.$tight ? 13 : 16)}px; color: #c8c8c8; white-space: nowrap;
  > span { text-align: right; }
`;
const CheckRow = styled.label`
  display: flex; align-items: center; gap: 3px; height: 20px; padding-left: 47px;
  input { width: 8px; height: 8px; background: #545454; border-radius: 1px; }
`;
const SideTabs = styled.nav`width: 14px; display: flex; flex-direction: column; gap: 2px; padding-top: 2px;`;
const SideTab = styled.button<{ $on?: boolean }>`
  writing-mode: vertical-rl; transform: rotate(180deg); width: 12px; height: 27px; text-align: center;
  border: 1px solid #2e2e2e; border-left: 0; border-radius: 0 2px 2px 0;
  color: ${p => (p.$on ? '#fff' : '#c0c0c0')}; background: ${p => (p.$on ? '#303030' : '#1d1d1d')};
`;

const mint = '#00d6a3', moss = '#5c8f5d';

function SocketList({ items, selected }: { items: [string, string][]; selected?: string }) {
  return (
    <ListRow>
      <List>
        {items.map(([t, c]) => <ListItem key={t} $c={c} $on={t === selected}>{t}</ListItem>)}
        <ListFoot><Icon n="triRight" s={6} /><Icon n="grip" s={9} /></ListFoot>
      </List>
      <ListButtons>
        {['plus', 'minus', 'up', 'downFill'].map(n => <IconButton key={n} $tone="grey" aria-label={n}><Icon n={n} s={8} /></IconButton>)}
      </ListButtons>
    </ListRow>
  );
}

function NodeEditor() {
  return (
    <Editor aria-label="Geometry node editor">
      <Bar $tall>
        <Group $w={18}><IconButton $w={11} aria-label="Editor type"><Icon n="down" s={7} /></IconButton></Group>
        <Group $gap={9} $w={404}>{['View', 'Select', 'Add', 'Node'].map(m => <MenuButton key={m}>{m}</MenuButton>)}</Group>
        <IconButton $w={20} aria-label="Browse node trees"><Icon n="nodes" /><Icon n="down" s={7} /></IconButton>
        <SceneName $w={80} aria-label="Node tree name" defaultValue="Geometry Nodes" />
        <IconButton $tone="grey" $w={13} aria-label="Fake user"><Icon n="shield" /></IconButton>
        <IconButton $tone="grey" $w={13} aria-label="New node tree"><Icon n="copy" /></IconButton>
        <IconButton $tone="grey" $w={13} aria-label="Unlink"><Icon n="close" s={9} /></IconButton>
        <IconButton $tone="none" $w={22} aria-label="Pin"><Icon n="pin" c="#a8a8a8" /></IconButton>
        <Group $end $gap={4}>
          <IconButton aria-label="Parent node tree"><Icon n="parent" c="#666" /></IconButton>
          <Group>
            <IconButton $tone="grey" aria-label="Snap"><Icon n="magnet" c="#999" /></IconButton>
            <IconButton $w={21} aria-label="Snap target"><Icon n="snapGrid" /><Icon n="down" s={7} /></IconButton>
          </Group>
          <Group>
            <IconButton $tone="blue" aria-label="Overlays"><Icon n="overlay" s={11} /></IconButton>
            <IconButton $w={14} aria-label="Overlay options"><Icon n="down" s={7} /></IconButton>
          </Group>
          <i />
        </Group>
      </Bar>
      <EditorBody>
        <Graph />
        <Sidebar>
          <Panels>
            <Panel>
              <PanelHead><Icon n="down" s={9} />Inputs<Icon n="grip" s={8} /></PanelHead>
              <SocketList selected="Depth" items={[['Geometry', mint], ['Height', moss], ['Width', moss], ['Depth', moss]]} />
              <PropRow><span>Type</span><Drop label="Type" value="Integer" w={63} /></PropRow>
              <PropRow><span>Name</span><TextField defaultValue="Depth" /></PropRow>
              <PropRow><span>Tooltip</span><TextField /></PropRow>
              <PropRow><span>Default At...</span><TextField /></PropRow>
              <PropRow><span>Default</span><TextField $number defaultValue="0" /></PropRow>
              <PropRow $tight><span>Min</span><TextField $number defaultValue="2" /></PropRow>
              <PropRow $tight><span>Max</span><TextField $number defaultValue="20" /></PropRow>
              <CheckRow><input type="checkbox" />Hide Value</CheckRow>
            </Panel>
            <Panel>
              <PanelHead><Icon n="down" s={9} />Outputs<Icon n="grip" s={8} /></PanelHead>
              <SocketList items={[['Geometry', mint]]} />
            </Panel>
          </Panels>
          <SideTabs>{['Node', 'Tool', 'View', 'Group'].map(t => <SideTab key={t} $on={t === 'Group'}>{t}</SideTab>)}</SideTabs>
        </Sidebar>
      </EditorBody>
    </Editor>
  );
}

/* ---------- timeline ---------- */

const TimelineBox = styled.section`flex: none; margin-top: 4px; background: #1d1d1d; border-radius: 4px; overflow: hidden;`;
const TimeBar = styled.div`display: flex; align-items: center; height: 16px; background: #303030;`;
const NumberField = styled.label<{ $w: number; $split?: boolean }>`
  display: flex; align-items: center; gap: 4px; width: ${p => p.$w}px; height: 12px; padding: 0 8px; background: #545454; border-radius: 2px;
  ${p => p.$split && css`border-left: 1px solid #3d3d3d;`}
  input { flex: 1; min-width: 0; width: 0; text-align: ${p => (p.$w < 50 ? 'center' : 'right')}; }
`;
const Ruler = styled.div`position: relative; display: flex; height: 31px; padding: 0 19px 0 38px; background: linear-gradient(#2b2b2b, #2b2b2b) 0 15px / 100% 10px no-repeat;`;
const Tick = styled.span`
  position: relative; flex: 1 1 0; text-align: center; line-height: 16px; color: #a8a8a8;
  &::before, &::after { content: ''; position: absolute; top: 15px; height: 9px; width: 1px; background: #191919; }
  &::before { left: 50%; } &::after { left: 0; background: #242424; }
`;
const TimeScroll = styled.div`position: absolute; left: 0; right: 5px; top: 24px; height: 5px; border-radius: 0 3px 3px 0; background: #545454;`;
const Playhead = styled.div`
  position: absolute; left: 15px; top: 2px; width: 15px; height: 12px; line-height: 12px; border-radius: 3px; background: #4772b3; color: #fff; text-align: center;
  &::after { content: ''; position: absolute; left: 7px; top: 12px; width: 1px; height: 17px; background: #4772b3; }
`;

function Timeline() {
  return (
    <TimelineBox aria-label="Timeline">
      <TimeBar>
        <Group $w={19}><IconButton $w={10} aria-label="Editor type"><Icon n="down" s={7} /></IconButton></Group>
        <Group $gap={5} $w={427}>
          <MenuButton>Playback<Icon n="down" s={7} /></MenuButton>
          <MenuButton>Keying<Icon n="down" s={7} /></MenuButton>
          <MenuButton>View</MenuButton><i /><MenuButton>Marker</MenuButton>
        </Group>
        <IconButton $tone="grey" aria-label="Auto keying"><Icon n="record" /></IconButton>
        <IconButton $tone="none" $w={17} aria-label="Keying options"><Icon n="down" s={6} c="#555" /></IconButton>
        <Group>
          {['first', 'prevKey', 'playBack', 'play', 'nextKey', 'last'].map(n => <IconButton key={n} $tone="grey" $w={13} aria-label={n}><Icon n={n} s={10} c="#f0f0f0" /></IconButton>)}
        </Group>
        <Group $end>
          <NumberField $w={49}><input aria-label="Current frame" defaultValue="1" /></NumberField>
          <Group $w={3} />
          <IconButton $tone="grey" $w={14} aria-label="Use preview range"><Icon n="clock" /></IconButton>
          <NumberField $w={57} $split>Start<input defaultValue="1" /></NumberField>
          <NumberField $w={56} $split>End<input defaultValue="250" /></NumberField>
          <Group $w={4} />
        </Group>
      </TimeBar>
      <Ruler>
        {Array.from({ length: 25 }, (_, i) => <Tick key={i}>{(i + 1) * 10}</Tick>)}
        <TimeScroll /><Playhead>1</Playhead>
      </Ruler>
    </TimelineBox>
  );
}

/* ---------- outliner and properties ---------- */

const Outliner = styled.section`flex: 0 0 204px; background: repeating-linear-gradient(#282828 0 13px, #2b2b2b 13px 26px) 0 17px; border-radius: 4px; overflow: hidden;`;
const OutHead = styled.div<{ $indent: number; $bg: string }>`display: flex; flex: none; align-items: center; gap: ${p => p.$indent}px; height: 16px; padding-left: 8px; background: ${p => p.$bg};`;
const Tree = styled.ul`list-style: none; margin: 0; padding: 2px 0 0;`;
const TreeRow = styled.li<{ $pad: number; $on?: boolean; $dim?: boolean }>`
  display: flex; align-items: center; gap: 3px; height: 13px; padding-left: ${p => p.$pad}px;
  color: ${p => (p.$on ? '#f0a86b' : p.$dim ? '#6c6c6c' : '#cfcfcf')};
  background: ${p => (p.$on ? '#314b7e' : 'transparent')};
`;
const IconTile = styled.span<{ $bg?: string }>`display: grid; place-items: center; width: 12px; height: 12px; border-radius: 3px; background: ${p => p.$bg || 'transparent'};`;
const DataIcons = styled.span`display: flex; gap: 2px; margin-left: 10px;`;
const ChildRows = styled.ul`
  position: relative; list-style: none; margin: 0; padding: 0;
  &::before { content: ''; position: absolute; left: 20px; top: 0; bottom: 6px; width: 1px; background: #5a5a5a; }
`;

const Properties = styled.section`flex: 1; margin-top: 2px; display: flex; flex-direction: column; background: #303030; border-radius: 4px; overflow: hidden;`;
const PropBody = styled.div`flex: 1; display: flex; min-height: 0;`;
const PropTabs = styled.nav`flex: none; width: 19px; display: flex; flex-direction: column; align-items: center; padding-top: 6px; background: #1b1b1b;`;
const PropTab = styled.button<{ $on?: boolean; $gap?: boolean }>`
  width: 17px; height: 18px; margin-top: ${p => (p.$gap ? 6 : 0)}px; display: grid; place-items: center; border-radius: 2px 0 0 2px;
  background: ${p => (p.$on ? '#303030' : 'transparent')};
`;
const PropContent = styled.div`flex: 1; min-width: 0; padding-left: 5px; overflow: hidden; white-space: nowrap;`;
const PropPath = styled.nav`display: flex; align-items: center; gap: 4px; height: 25px; padding-left: 2px; `;
const AddModifier = styled.button`display: block; width: 160px; height: 13px; margin: 4px 0 8px 1px; padding-left: 4px; text-align: left; background: #262626; border-radius: 2px;`;
const Modifier = styled.article`width: 180px; height: 122px; border: 1px solid #4b68a0; border-radius: 2px; background: #3b3b3b;`;
const ModHead = styled.div`display: flex; align-items: center; height: 16px; padding-left: 3px; gap: 2px;`;
const ModName = styled.input`width: 57px; height: 12px; margin-left: 6px; padding-left: 5px; background: #1d1d1d; border-radius: 2px;`;
const ModTree = styled.div`display: flex; align-items: center; height: 20px; padding-left: 6px; input { flex: 1; height: 12px; padding-left: 4px; background: #1d1d1d; }`;
const ModRows = styled.div`padding-bottom: 4px;`;
const ModRow = styled.label`
  display: grid; grid-template-columns: 68px 94px; column-gap: 6px; height: 16px; align-items: center; color: #c8c8c8;
  span { text-align: right; }
`;
const SubPanel = styled.button`display: flex; align-items: center; gap: 4px; height: 16px; padding-left: 12px;`;

const treeRows: { text: string; icon: string; c?: string; on?: boolean; dim?: boolean; tile?: string; data: [string, string, string?][] }[] = [
  { text: 'Building', icon: 'triangle', c: '#f0a86b', on: true, tile: '#5b6b8c', data: [['wrenchLine', '#7b8fe0'], ['mesh', '#1ec8b0']] },
  { text: 'Camera', icon: 'movieCamera', c: '#e08c4a', data: [['cameraData', '#35c98d', '#3f6d5a']] },
  { text: 'Light', icon: 'bulb', c: '#e08c4a', data: [['lightData', '#1fae7a']] },
  { text: 'Middle', icon: 'triangle', c: '#9a6a45', dim: true, data: [['mesh', '#187a5a']] },
  { text: 'Middle.001', icon: 'triangle', c: '#9a6a45', dim: true, data: [['mesh', '#187a5a']] },
];

const propTabs: [string, string, boolean?][] = [
  ['tools', '#bdbdbd'], ['render', '#bdbdbd', true], ['output', '#bdbdbd'], ['imageStack', '#bdbdbd'], ['scene', '#bdbdbd'], ['world', '#c04a55'],
  ['archiveLine', '#cfcfcf', true], ['object', '#d98a4a', true], ['wrench', '#6f8fe8'], ['particles', '#5d86c9'], ['physics', '#5d86c9'], ['constraint', '#5d7ac9'],
  ['mesh', '#1fc48a'], ['materialTab', '#d0606c'], ['texture', '#c05560', true],
];

function RightColumn() {
  return (
    <Column>
      <Outliner aria-label="Outliner">
        <OutHead $indent={5} $bg="#2b2b2b">
          <IconButton $w={18} aria-label="Editor type"><Icon n="tree" /><Icon n="down" s={7} /></IconButton>
          <IconButton $w={18} aria-label="Display mode"><Icon n="imageStack" /><Icon n="down" s={7} /></IconButton>
          <Group $w={7} /><Search label="Filter outliner" />
        </OutHead>
        <Tree>
          <TreeRow $pad={14}><IconTile><Icon n="archive" /></IconTile>Scene Collection</TreeRow>
          <TreeRow $pad={16}><Icon n="triDown" s={7} /><IconTile $bg="#4a4a4a"><Icon n="archive" c="#fff" /></IconTile>Collection</TreeRow>
          <li>
            <ChildRows>
              {treeRows.map(r => (
                <TreeRow key={r.text} $pad={30} $on={r.on} $dim={r.dim}>
                  <Icon n="triRight" s={7} c={r.dim ? '#888' : '#ddd'} />
                  <IconTile $bg={r.tile}><Icon n={r.icon} c={r.c} /></IconTile>{r.text}
                  <DataIcons>{r.data.map(([n, c, bg]) => <IconTile key={n} $bg={bg}><Icon n={n} c={c} s={10} /></IconTile>)}</DataIcons>
                </TreeRow>
              ))}
            </ChildRows>
          </li>
        </Tree>
      </Outliner>
      <Properties aria-label="Properties">
        <OutHead $indent={5} $bg="#303030">
          <IconButton $w={18} aria-label="Editor type"><Icon n="props" /><Icon n="down" s={7} /></IconButton>
          <Group $w={39} /><Search label="Search properties" />
        </OutHead>
        <PropBody>
          <PropTabs>{propTabs.map(([n, c, gap]) => <PropTab key={n} $gap={gap} $on={n === 'wrench'} aria-label={n}><Icon n={n} s={10} c={c} /></PropTab>)}</PropTabs>
          <PropContent>
            <PropPath><Crumb href="#object"><Icon n="object" />Building</Crumb><Icon n="right" s={7} /><Crumb href="#modifier"><Icon n="geo" />GeometryNodes</Crumb></PropPath>
            <AddModifier>Add Modifier</AddModifier>
            <Modifier>
              <ModHead>
                <Icon n="down" s={9} c="#999" /><Icon n="geo" />
                <ModName aria-label="Modifier name" defaultValue="GeometryNo..." />
                <Group>
                  <IconButton $tone="grey" $w={13} aria-label="On cage"><Icon n="mesh" /></IconButton>
                  {['editMesh', 'monitor', 'photo'].map(n => <IconButton key={n} $tone="blue" $w={13} aria-label={n}><Icon n={n} /></IconButton>)}
                </Group>
              </ModHead>
              <ModTree><IconButton $w={20} aria-label="Browse node groups"><Icon n="nodes" /><Icon n="down" s={7} /></IconButton><input aria-label="Node group" defaultValue="Geometry Nodes" /></ModTree>
              <ModRows>{[['Height', '3'], ['Width', '2'], ['Depth', '2']].map(([l, v]) => <ModRow key={l}><span>{l}</span><TextField $number defaultValue={v} /></ModRow>)}</ModRows>
              <SubPanel><Icon n="right" s={8} c="#999" />Output Attributes</SubPanel>
              <SubPanel><Icon n="right" s={8} c="#999" />Internal Dependencies</SubPanel>
            </Modifier>
          </PropContent>
        </PropBody>
      </Properties>
    </Column>
  );
}

/* ---------- status and desktop task bar ---------- */

const StatusBar = styled.footer`flex: none; height: 13px; display: flex; align-items: center; gap: 128px; padding-left: 129px; background: #1d1d1d; color: #aaa;`;
const TaskBar = styled.div`flex: none; position: relative; height: 7px; display: flex; padding-left: 16px; background: linear-gradient(90deg, #1f3840, #1e3442 50%, #1d2f55); overflow: hidden;`;
const TaskSearch = styled.input`flex: none; width: 226px; height: 7px; background: #f4f4f4;`;
const TaskIcons = styled.svg`flex: none; position: absolute; left: 0; top: 0;`;
const Clock = styled.time`flex: none; margin-left: auto; line-height: 8px; color: #fff; white-space: nowrap;`;

export default function App() {
  return (
    <Shell>
      <Global />
      <TopBar>
        <Menus>{['File', 'Edit', 'Render', 'Window', 'Help'].map(m => <MenuButton key={m}>{m}</MenuButton>)}</Menus>
        <Tabs>
          {['Layout', 'Modeling', 'Sculpting', 'UV Editing', 'Texture Paint', 'Shading', 'Animation', 'Rendering', 'Compositing', 'Geometry Nodes', 'Scripting'].map((t, i) => <Tab key={t} $on={i === 0}>{t}</Tab>)}
          <Tab aria-label="Add workspace"><Icon n="plus" s={7} /></Tab>
        </Tabs>
        <SceneBar>
          <IconButton $w={20} aria-label="Browse scene"><Icon n="scene" /><Icon n="down" s={7} /></IconButton>
          <SceneName $w={65} aria-label="Scene name" defaultValue="Scene" />
          <IconButton $tone="none" $w={15} aria-label="Pin scene"><Icon n="pin" s={9} c="#777" /></IconButton>
          <IconButton $tone="grey" $w={12} aria-label="New scene"><Icon n="copy" /></IconButton>
          <IconButton $tone="dark" $w={13} aria-label="Delete scene"><Icon n="close" s={8} c="#666" /></IconButton>
          <Group $w={7} />
          <IconButton $w={17} aria-label="Browse view layer"><Icon n="imageStack" s={9} /><Icon n="down" s={6} /></IconButton>
          <SceneName $w={70} aria-label="View layer name" defaultValue="ViewLayer" />
        </SceneBar>
      </TopBar>
      <Main>
        <Column><ViewportPanel /><NodeEditor /><Timeline /></Column>
        <RightColumn />
      </Main>
      <StatusBar><Icon n="mouseM" s={11} /><Icon n="mouseR" s={11} /></StatusBar>
      <TaskBar>
        <TaskSearch aria-label="Search" />
        <TaskIcons width="642" height="7" viewBox="0 0 642 7" aria-hidden="true">
          <path d="M192 4l4 3h-3zM200 3l3 1-3 3z" fill="#b5a8c8" /><path d="M195 5l3-1 3 3h-5z" fill="#e8c83a" />
          <path d="M319 7a5 3 0 0 1 10 0z" fill="#2ec0d0" /><rect x="352" y="5" width="8" height="2" fill="#2fa4dc" />
          <path d="M385 7l4-2 3 2z" fill="#2468b4" /><circle cx="484" cy="8" r="3" fill="#7b8790" /><path d="M517 7l3-3v3z" fill="#e8c83a" />
          <rect x="542" y="5" width="16" height="2" fill="#8a8f5c" /><path d="M584 7l3-2 2 2z" fill="#2f8fe0" /><rect x="599" y="0" width="31" height="7" fill="#465f6b" />
        </TaskIcons>
        <Clock>6:52 P</Clock>
      </TaskBar>
    </Shell>
  );
}
